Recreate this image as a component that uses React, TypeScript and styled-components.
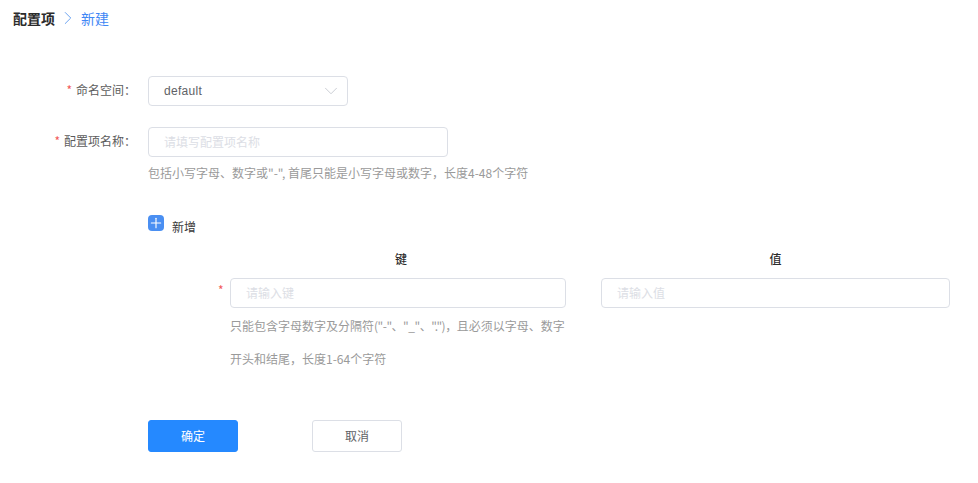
import React from "react";
import styled, { createGlobalStyle } from "styled-components";
import { ChevronDown, ChevronRight, Plus } from "lucide-react";

const GlobalStyle = createGlobalStyle`
  html, body {
    margin: 0;
    background: #fff;
  }
  body {
    font-family: "Noto Sans CJK SC", "Liberation Sans", sans-serif;
    font-size: 12px;
    color: #636363;
  }
  input::placeholder {
    color: #dcdee5;
  }
`;

const Page = styled.div`
  width: 978px;
  height: 483px;
  overflow: hidden;
  box-sizing: border-box;
`;

const Breadcrumb = styled.nav`
  height: 36px;
  padding-left: 13px;
  display: flex;
  align-items: center;
  font-size: 14px;
`;

const CrumbRoot = styled.span`
  font-weight: 700;
  color: #2b2b2b;
`;

const CrumbSep = styled.span`
  display: flex;
  margin: 0 2px;
  color: #5f9bf0;
`;

const CrumbCurrent = styled.span`
  color: #3f87f5;
`;

const Form = styled.form`
  padding-top: 40px;
`;

const Row = styled.div<{ $mb: number }>`
  display: flex;
  align-items: flex-start;
  margin-bottom: ${(p) => p.$mb}px;
`;

const Label = styled.label`
  width: 136px;
  height: 30px;
  margin-right: 12px;
  display: flex;
  justify-content: flex-end;
  align-items: center;
  padding-bottom: 3px;
  box-sizing: border-box;
  color: #5c5c5c;
`;

const Star = styled.span`
  color: #f25a5a;
  margin-right: 4px;
`;

const Field = styled.div`
  display: flex;
  flex-direction: column;
`;

const Select = styled.div`
  width: 200px;
  height: 30px;
  box-sizing: border-box;
  border: 1px solid #dcdfe6;
  border-radius: 4px;
  padding: 0 5px 0 15px;
  display: flex;
  align-items: center;
  justify-content: space-between;
  font-family: "Liberation Sans", sans-serif;
  letter-spacing: 0.3px;
  color: #606266;
`;

const Input = styled.input<{ $width: number }>`
  display: block;
  width: ${(p) => p.$width}px;
  height: 30px;
  box-sizing: border-box;
  border: 1px solid #dcdfe6;
  border-radius: 4px;
  padding: 0 15px 2px;
  outline: none;
  font: inherit;
  color: #606266;
`;

const Hint = styled.div<{ $mt: number }>`
  margin-top: ${(p) => p.$mt}px;
  color: #9a9a9a;
  line-height: 33px;
  white-space: nowrap;
`;

const TightPunct = styled.span`
  letter-spacing: -0.5px;
`;

const AddRow = styled.div`
  margin-left: 148px;
  height: 16px;
  display: flex;
  align-items: flex-start;
  gap: 8px;
`;

const AddIcon = styled.span`
  width: 16px;
  height: 16px;
  border-radius: 4px;
  background: #4a8ff2;
  display: flex;
  align-items: center;
  justify-content: center;
  color: #fff;
  overflow: hidden;
`;

const AddText = styled.span`
  color: #3a3a3a;
  margin-top: 3px;
`;

const KvGrid = styled.div`
  margin: 19px 0 0 212px;
  display: grid;
  grid-template-columns: 18px 336px 384px;
`;

const ColHead = styled.div<{ $offset: number }>`
  height: 19px;
  margin-left: ${(p) => p.$offset}px;
  margin-bottom: 9px;
  line-height: 18px;
  text-align: center;
  font-weight: 500;
  color: #2b2b2b;
`;

const RowStar = styled.div`
  grid-row: 2;
  color: #f25a5a;
  margin-top: 3px;
  margin-left: 6px;
`;

const KeyCell = styled.div`
  grid-row: 2;
`;

const ValueCell = styled.div`
  grid-row: 2;
  margin-left: 35px;
`;

const Actions = styled.div`
  margin: 45px 0 0 148px;
  display: flex;
  gap: 74px;
`;

const Button = styled.button<{ $primary?: boolean }>`
  width: 90px;
  height: 32px;
  box-sizing: border-box;
  border-radius: 3px;
  border: 1px solid ${(p) => (p.$primary ? "#2589ff" : "#dcdfe6")};
  background: ${(p) => (p.$primary ? "#2589ff" : "#fff")};
  color: ${(p) => (p.$primary ? "#fff" : "#606266")};
  font: inherit;
  padding: 0 0 2px;
`;

export default function App() {
  return (
    <Page>
      <GlobalStyle />
      <Breadcrumb>
        <CrumbRoot>配置项</CrumbRoot>
        <CrumbSep>
          <ChevronRight size={22} strokeWidth={1} />
        </CrumbSep>
        <CrumbCurrent>新建</CrumbCurrent>
      </Breadcrumb>
      <Form>
        <Row $mb={21}>
          <Label>
            <Star>*</Star>命名空间：
          </Label>
          <Select>
            default
            <ChevronDown size={22} strokeWidth={0.9} color="#c0c4cc" />
          </Select>
        </Row>
        <Row $mb={26}>
          <Label>
            <Star>*</Star>配置项名称：
          </Label>
          <Field>
            <Input $width={300} placeholder="请填写配置项名称" />
            <Hint $mt={-1}>包括小写字母、数字或"-", 首尾只能是小写字母或数字，长度4-48个字符</Hint>
          </Field>
        </Row>
        <AddRow>
          <AddIcon>
            <Plus size={18} strokeWidth={1.7} />
          </AddIcon>
          <AddText>新增</AddText>
        </AddRow>
        <KvGrid>
          <span />
          <ColHead $offset={6}>键</ColHead>
          <ColHead $offset={35}>值</ColHead>
          <RowStar>*</RowStar>
          <KeyCell>
            <Input $width={336} placeholder="请输入键" />
            <Hint $mt={1}>
              只能包含字母数字及分隔符<TightPunct>("-"、"_"、".")，</TightPunct>且必须以字母、数字
              <br />
              开头和结尾，长度1-64个字符
            </Hint>
          </KeyCell>
          <ValueCell>
            <Input $width={349} placeholder="请输入值" />
          </ValueCell>
        </KvGrid>
        <Actions>
          <Button type="button" $primary>
            确定
          </Button>
          <Button type="button">取消</Button>
        </Actions>
      </Form>
    </Page>
  );
}
